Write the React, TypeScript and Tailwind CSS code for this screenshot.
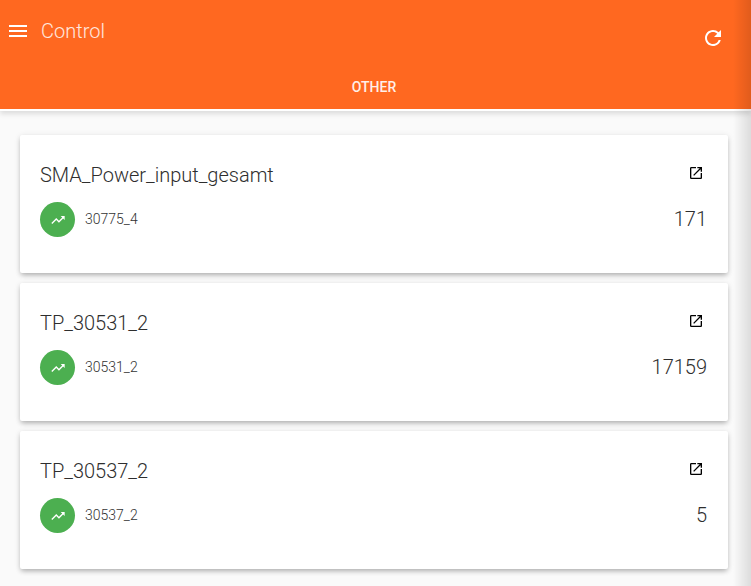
const cards = [
  { title: "SMA_Power_input_gesamt", id: "30775_4", value: "171" },
  { title: "TP_30531_2", id: "30531_2", value: "17159" },
  { title: "TP_30537_2", id: "30537_2", value: "5" },
];

function Card({ title, id, value }: { title: string; id: string; value: string }) {
  return (
    <div className="h-[138px] rounded-[2px] bg-white pl-5 pr-[21px] pt-[27px] shadow-[0_3px_5px_-1px_rgba(0,0,0,0.25),0_1px_6px_0_rgba(0,0,0,0.1)]">
      <div className="flex items-start justify-between">
        <div className="text-[20px] leading-[26px] font-light text-[#2e2e2e]">{title}</div>
        <svg viewBox="0 0 24 24" className="mr-[3px] mt-[3px] h-[16px] w-[16px] fill-black">
          <path d="M19 19H5V5h7V3H5a2 2 0 0 0-2 2v14a2 2 0 0 0 2 2h14c1.1 0 2-.9 2-2v-7h-2v7zM14 3v2h3.59l-9.83 9.83 1.41 1.41L19 6.41V10h2V3h-7z" />
        </svg>
      </div>
      <div className="mt-[14px] flex items-center justify-between">
        <div className="flex items-center gap-[10px]">
          <div className="flex h-[35px] w-[35px] items-center justify-center rounded-full bg-[#4caf50]">
            <svg viewBox="0 0 24 24" className="h-[16px] w-[16px] fill-white">
              <path d="M16 6l2.29 2.29-4.88 4.88-4-4L2 16.59 3.41 18l6-6 4 4 6.3-6.29L22 12V6z" />
            </svg>
          </div>
          <div className="text-[14px] font-light text-[#333]">{id}</div>
        </div>
        <div className="mb-[2px] text-[20px] font-light text-[#2e2e2e]">{value}</div>
      </div>
    </div>
  );
}

export default function App() {
  return (
    <div className="relative h-[586px] w-[751px] overflow-hidden bg-[#fafafa] font-['Roboto',sans-serif]">
      <header className="h-[111px] border-b-2 border-white bg-[#ff6820] shadow-[0_3px_5px_0_rgba(0,0,0,0.12)]">
        <div className="flex h-[64px] items-start justify-between">
          <div className="flex items-center pl-[6px] pt-[19px]">
            <svg viewBox="0 0 24 24" className="h-[24px] w-[24px] fill-white">
              <path d="M3 18h18v-2H3v2zm0-5h18v-2H3v2zm0-7v2h18V6H3z" />
            </svg>
            <span className="ml-[11px] text-[20px] leading-[24px] font-light text-white/85">Control</span>
          </div>
          <svg viewBox="0 0 24 24" className="mr-[26px] mt-[26px] h-[24px] w-[24px] fill-white">
            <path d="M17.65 6.35A7.958 7.958 0 0 0 12 4c-4.42 0-7.99 3.58-7.99 8s3.57 8 7.99 8c3.73 0 6.84-2.55 7.73-6h-2.08A5.99 5.99 0 0 1 12 18c-3.31 0-6-2.69-6-6s2.69-6 6-6c1.66 0 3.14.69 4.22 1.78L13 11h7V4l-2.35 2.35z" />
          </svg>
        </div>
        <div className="pr-[3px] pt-[14px] text-center text-[14px] leading-[18px] font-medium text-white/90 uppercase">
          Other
        </div>
      </header>
      <main className="flex flex-col gap-[10px] pl-5 pr-[23px] pt-[24px]">
        {cards.map((c) => (
          <Card key={c.id} {...c} />
        ))}
      </main>
      {/* drawer shadow on the right edge */}
      <div className="pointer-events-none absolute inset-y-0 right-0 w-[18px] bg-gradient-to-r from-black/0 to-black/12" />
    </div>
  );
}
